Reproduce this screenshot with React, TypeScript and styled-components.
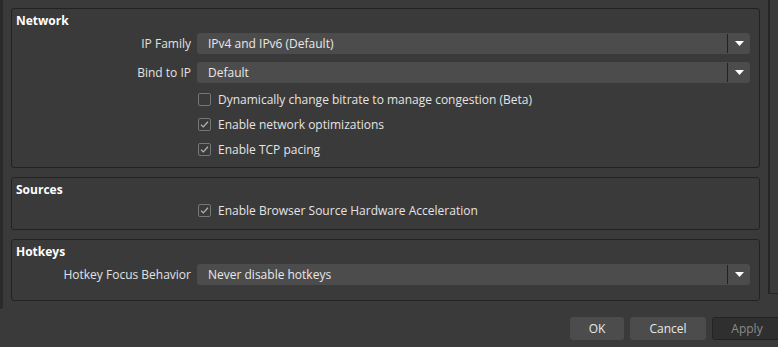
import styled, {createGlobalStyle} from 'styled-components';

const GlobalStyle = createGlobalStyle`
  html, body {
    margin: 0;
    padding: 0;
    background: #3a3a3a;
  }
  body {
    font-family: "Open Sans", "Liberation Sans", sans-serif;
    font-size: 12px;
    color: #e4e4e4;
  }
`;

interface CheckProps {
  checked?: boolean;
  label: string;
}

function CheckRow({checked, label}: CheckProps) {
  return (
    <CheckLine>
      <CheckBox>
        {checked && (
          <svg width="11" height="11" viewBox="0 0 11 11">
            <path d="M2 5.6 L4.3 7.9 L9 2.8" fill="none" stroke="#b4b4b4" strokeWidth="1.3"/>
          </svg>
        )}
      </CheckBox>
      <span>{label}</span>
    </CheckLine>
  );
}

function Combo({value}: { value: string }) {
  return (
    <ComboBox>
      <ComboText>{value}</ComboText>
      <ComboArrow>
        <svg width="9" height="5" viewBox="0 0 9 5">
          <path d="M0 0 H9 L4.5 5 Z" fill="#ffffff"/>
        </svg>
      </ComboArrow>
    </ComboBox>
  );
}

export default function App() {
  return (
    <Page>
      <GlobalStyle/>
      <Main>
        <LeftEdge/>
        <Scroll>

          {/* Network */}
          <Group $pb={9}>
            <GroupTitle>Network</GroupTitle>
            <Form>
              <Label>IP Family</Label>
              <Combo value="IPv4 and IPv6 (Default)"/>
              <Label>Bind to IP</Label>
              <Combo value="Default"/>
              <Spacer/>
              <CheckRow label="Dynamically change bitrate to manage congestion (Beta)"/>
              <Spacer/>
              <CheckRow checked label="Enable network optimizations"/>
              <Spacer/>
              <CheckRow checked label="Enable TCP pacing"/>
            </Form>
          </Group>

          {/* Sources */}
          <Group $pb={10}>
            <GroupTitle>Sources</GroupTitle>
            <Form>
              <Spacer/>
              <CheckRow checked label="Enable Browser Source Hardware Acceleration"/>
            </Form>
          </Group>

          {/* Hotkeys */}
          <Group $pb={15}>
            <GroupTitle>Hotkeys</GroupTitle>
            <Form>
              <Label>Hotkey Focus Behavior</Label>
              <Combo value="Never disable hotkeys"/>
            </Form>
          </Group>

        </Scroll>
        <RightEdge/>
      </Main>

      <ButtonBar>
        <Button $w={54}>OK</Button>
        <Button $w={76}>Cancel</Button>
        <Button $w={70} $disabled>Apply</Button>
      </ButtonBar>
    </Page>
  );
}


const Page = styled.div`
  width: 778px;
  height: 347px;
  overflow: hidden;
  display: flex;
  flex-direction: column;
  background: #3a3a3a;
`;

const Main = styled.div`
  display: flex;
  height: 309px;
  flex-shrink: 0;
`;

const LeftEdge = styled.div`
  width: 3px;
  background: #2a2a2a;
  border-bottom-right-radius: 2px;
`;

const Scroll = styled.div`
  width: 749px;
  padding: 8px 0 0 8px;
  display: flex;
  flex-direction: column;
  gap: 9px;
`;

const RightEdge = styled.div`
  margin-left: 8px;
  width: 8px;
  height: 293px;
  border-left: 2px solid #262626;
  border-bottom: 1px solid #262626;
  background: #3b3b3b;
`;

const Group = styled.div<{ $pb: number }>`
  border: 1px solid #222222;
  border-radius: 3px;
  padding: 3px 9px ${p => p.$pb}px 4px;
`;

const GroupTitle = styled.div`
  font-weight: 700;
  color: #ffffff;
  line-height: 18px;
  height: 18px;
  margin-bottom: 3px;
`;

const Form = styled.div`
  display: grid;
  grid-template-columns: 175px 1fr;
  column-gap: 6px;
  row-gap: 8px;
  align-items: center;
`;

const Label = styled.div`
  text-align: right;
  color: #e2e2e2;
`;

const Spacer = styled.div``;

const ComboBox = styled.div`
  height: 21px;
  display: flex;
  align-items: stretch;
  background: #4c4c4c;
  border-radius: 3px;
`;

const ComboText = styled.div`
  flex: 1;
  padding-left: 11px;
  line-height: 21px;
  color: #e8e8e8;
`;

const ComboArrow = styled.div`
  width: 22px;
  margin: 1px 0;
  border-left: 1px solid #222222;
  display: flex;
  align-items: center;
  justify-content: center;
`;

const CheckLine = styled.div`
  height: 17px;
  display: flex;
  align-items: center;
  gap: 7px;
  padding-left: 1px;
  color: #e4e4e4;
`;

const CheckBox = styled.div`
  width: 11px;
  height: 11px;
  border: 1px solid #767676;
  border-radius: 2px;
  display: flex;
  align-items: center;
  justify-content: center;
`;

const ButtonBar = styled.div`
  display: flex;
  justify-content: flex-end;
  gap: 6px;
  padding-top: 8px;
  margin-right: -4px;
`;

const Button = styled.div<{ $w: number; $disabled?: boolean }>`
  width: ${p => p.$w}px;
  height: 23px;
  box-sizing: border-box;
  text-align: center;
  border-radius: 3px;
  background: ${p => (p.$disabled ? '#2f2f2f' : '#4c4c4c')};
  border: ${p => (p.$disabled ? '1px solid #232323' : 'none')};
  line-height: ${p => (p.$disabled ? 21 : 23)}px;
  color: ${p => (p.$disabled ? '#8a8a8a' : '#e8e8e8')};
`;
